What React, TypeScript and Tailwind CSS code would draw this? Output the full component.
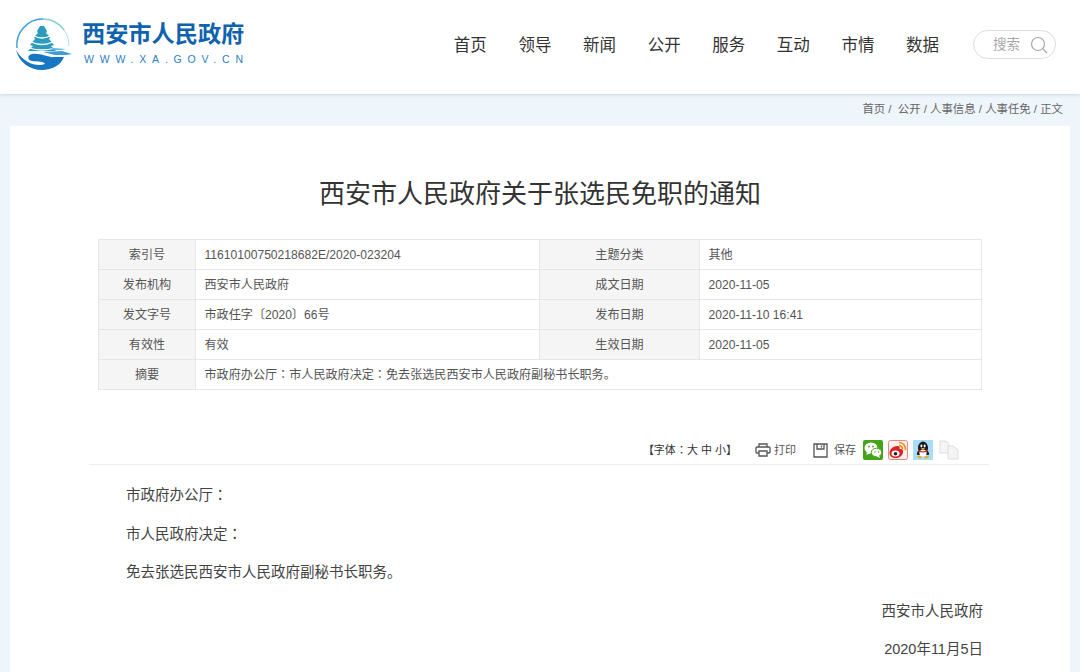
const font = { fontFamily: '"Liberation Sans", "Noto Sans CJK SC", sans-serif' };

function C() {
  return <span className="font-['Noto_Sans_CJK_TC'] leading-none">：</span>;
}

function Logo() {
  return (
    <svg width="60" height="53" viewBox="0 0 60 53" className="shrink-0">
      <path d="M3 30 A26 26 0 0 1 29 1" fill="none" stroke="#3aa0d8" strokeWidth="1.5" />
      <path d="M29 1 A26 26 0 0 1 50 12" fill="none" stroke="#86cfdc" strokeWidth="1.4" />
      <path d="M50 12 A26 26 0 0 1 55 28" fill="none" stroke="#b8e2ea" strokeWidth="1.1" />
      <path d="M26 8 L30 8 L33 13 L32 15 L36 19 L35 21 L40 27 L37 28 L42 33 L14 33 L19 28 L16 27 L21 21 L20 19 L24 15 L23 13 Z" fill="#2c9cbc" />
      <path d="M20 18 Q28 22 36 18 M17 24 Q28 29 39 24 M15 30 Q28 34 41 30" stroke="#fff" strokeWidth="1.3" fill="none" />
      <path d="M2 32 C5 44 15 52 28 52 C38 52 47 47 50 39 L40 39 C36 40 27 35 18 36 C13 37 13 42 18 43 C24 44 30 43 31 46 C24 49 10 46 2 32 Z" fill="#1877c2" />
      <path d="M29 34 L48 33 L58 36 L52 37 L41 37 Z" fill="#3d9dd8" />
      <path d="M38 30 L52 31 L47 32 L38 32 Z" fill="#5cb4df" />
    </svg>
  );
}

function Row({ a, b, c, d }: { a: string; b: React.ReactNode; c?: string; d?: string }) {
  return (
    <div className="flex h-[30px] border-b border-[#e6e6e6]">
      <div className="w-[97px] shrink-0 bg-[#f5f5f5] border-r border-[#e6e6e6] flex items-center justify-center pt-[1px]">{a}</div>
      {c ? (
        <>
          <div className="w-[343px] shrink-0 pl-[8.5px] flex items-center pt-[1px]">{b}</div>
          <div className="w-[161px] shrink-0 bg-[#f5f5f5] border-x border-[#e6e6e6] flex items-center justify-center pt-[1px]">{c}</div>
          <div className="flex-1 pl-[8.5px] flex items-center pt-[1px]">{d}</div>
        </>
      ) : (
        <div className="flex-1 pl-[8.5px] flex items-center pt-[1px]"><span>{b}</span></div>
      )}
    </div>
  );
}

function Tools() {
  return (
    <div className="flex items-center h-[30px] mr-[30px] justify-end text-[11px] text-[#444]">
      <span className="mr-[18px] text-[#333]">【字体<C />大 中 小】</span>
      <svg width="16" height="14" viewBox="0 0 16 14" fill="none" stroke="#555" strokeWidth="1.3" className="mr-[3px]">
        <path d="M4 4 V1 H12 V4 M4 10 H2 Q1 10 1 9 V5 Q1 4 2 4 H14 Q15 4 15 5 V9 Q15 10 14 10 H12 M4 8 H12 V13 H4 Z" />
      </svg>
      <span className="mr-[17px] text-[#555]">打印</span>
      <svg width="15" height="15" viewBox="0 0 15 15" fill="none" stroke="#555" strokeWidth="1.3" className="mr-[6px]">
        <path d="M1 1 H14 V14 H1 Z M4 1 V6 H11 V1 M8.5 2.5 V4.5" />
      </svg>
      <span className="mr-[7px] text-[#555]">保存</span>
      <svg width="20" height="20" viewBox="0 0 20 20" className="mr-[5px]">
        <rect width="20" height="20" rx="2" fill="#45a318" />
        <ellipse cx="8" cy="8" rx="6.5" ry="5.5" fill="#fff" />
        <path d="M4 11 L3.5 15 L7.5 13 Z" fill="#fff" />
        <ellipse cx="13.5" cy="12.5" rx="5.2" ry="4.3" fill="#fff" stroke="#45a318" />
        <path d="M16 15.5 L17 18 L13.5 16.5 Z" fill="#fff" />
        <circle cx="6" cy="6.5" r="0.9" fill="#45a318" /><circle cx="10" cy="6.5" r="0.9" fill="#45a318" />
        <circle cx="12" cy="12" r="0.7" fill="#45a318" /><circle cx="15.5" cy="12" r="0.7" fill="#45a318" />
      </svg>
      <svg width="20" height="20" viewBox="0 0 20 20" className="mr-[5px]">
        <rect x="0.5" y="0.5" width="19" height="19" rx="2" fill="#fdf0ea" stroke="#e08a80" />
        <path d="M1.5 13 C1.5 9 6 5.5 10 6 C12 6.5 12 8 11.5 9 C14 8.5 15.5 10 15 12.5 C14.5 16 11 18 7.5 18 C4 18 1.5 16 1.5 13 Z" fill="#dc2222" />
        <ellipse cx="7.5" cy="13.5" rx="4" ry="3" fill="#fff" />
        <circle cx="7.5" cy="13.7" r="1.8" fill="#222" />
        <path d="M11 2.5 A6.5 6.5 0 0 1 17.5 10 M11 5.5 A3.5 3.5 0 0 1 14.5 9.5" fill="none" stroke="#f08a1c" strokeWidth="1.7" />
      </svg>
      <svg width="20" height="20" viewBox="0 0 20 20" className="mr-[6px]">
        <rect width="20" height="20" fill="#a9dcf7" />
        <ellipse cx="10" cy="8" rx="5" ry="6.5" fill="#1a1a1a" />
        <path d="M5 11 Q3 14 4.5 15 L15.5 15 Q17 14 15 11 Z" fill="#1a1a1a" />
        <ellipse cx="10" cy="13" rx="3.6" ry="3.6" fill="#fff" />
        <ellipse cx="8.4" cy="6" rx="1" ry="1.4" fill="#fff" /><ellipse cx="11.6" cy="6" rx="1" ry="1.4" fill="#fff" />
        <path d="M7.5 8 H12.5 L10 9.6 Z" fill="#f5b21c" />
        <path d="M5.5 10 Q10 12.5 14.5 10 L14.5 11.5 Q10 13.5 5.5 11.5 Z" fill="#d9261c" />
        <path d="M4 16 Q4 18.5 8 18.5 L9 16.5 Z M16 16 Q16 18.5 12 18.5 L11 16.5 Z" fill="#f5a51c" />
      </svg>
      <svg width="20" height="20" viewBox="0 0 20 20" fill="#f4f4f4" stroke="#dedede">
        <path d="M1 1 H7 L10 4 V13 H1 Z" />
        <path d="M9 6 H14 L19 10 V19 H9 Z" />
      </svg>
    </div>
  );
}

export default function App() {
  const nav = ["首页", "领导", "新闻", "公开", "服务", "互动", "市情", "数据"];
  return (
    <div className="w-[1080px] h-[672px] overflow-hidden bg-[#eef5fb]" style={font}>
      <header className="h-[94px] bg-white shadow-[0_1px_3px_rgba(170,195,220,0.6)] flex items-start pl-[14px] pr-[24px]">
        <div className="mt-[18px]"><Logo /></div>
        <div className="ml-[8px] mt-[19px] flex flex-col">
          <div className="text-[23.2px] leading-[30px] font-bold text-[#0f62ad] whitespace-nowrap">西安市人民政府</div>
          <div className="text-[10.5px] leading-[14px] mt-[3px] ml-[2px] text-[#2a7fc4] tracking-[5.8px] whitespace-nowrap">WWW.XA.GOV.CN</div>
        </div>
        <nav className="flex gap-[31.6px] ml-[205px] mt-[33px] text-[16.5px] leading-[24px] text-[#333]">
          {nav.map((n) => (
            <span key={n} className="w-[33px] whitespace-nowrap">{n}</span>
          ))}
        </nav>
        <div className="ml-auto mt-[30px] w-[83px] h-[29px] rounded-full border border-[#dcdcdc] flex items-center pl-[19px] text-[13.5px] text-[#a8a8a8]">
          <span className="pt-[1px]">搜索</span>
          <svg width="18" height="18" viewBox="0 0 18 18" fill="none" stroke="#a8a8a8" strokeWidth="1.2" className="ml-[10px]">
            <circle cx="8" cy="8" r="6.5" />
            <path d="M13 13 L17 17" />
          </svg>
        </div>
      </header>

      <div className="h-[32px] flex items-center justify-end pr-[17px] text-[11.4px] text-[#666] whitespace-pre">
        首页 /  公开 / 人事信息 / 人事任免 / 正文
      </div>

      <main className="mx-[10px] bg-white h-[546px] flex flex-col">
        <h1 className="mt-[50px] text-[26px] leading-[36px] text-center text-[#333] font-normal">西安市人民政府关于张选民免职的通知</h1>

        <div className="mt-[27px] mx-[88px] border border-b-0 border-[#e6e6e6] text-[12.1px] text-[#555]">
          <Row a="索引号" b="11610100750218682E/2020-023204" c="主题分类" d="其他" />
          <Row a="发布机构" b="西安市人民政府" c="成文日期" d="2020-11-05" />
          <Row a="发文字号" b="市政任字〔2020〕66号" c="发布日期" d="2020-11-10 16:41" />
          <Row a="有效性" b="有效" c="生效日期" d="2020-11-05" />
          <Row a="摘要" b={<>市政府办公厅<C />市人民政府决定<C />免去张选民西安市人民政府副秘书长职务。</>} />
        </div>

        <div className="mt-[45px] ml-[79px] mr-[81px] h-[30px] border-b border-[#eeeeee]">
          <Tools />
        </div>

        <article className="mx-[116px] mt-[11px] text-[14.5px] leading-[38.5px] text-[#444]">
          <p>市政府办公厅<C /></p>
          <p>市人民政府决定<C /></p>
          <p>免去张选民西安市人民政府副秘书长职务。</p>
          <p className="text-right -mr-[29px]">西安市人民政府</p>
          <p className="text-right -mr-[29px]">2020年11月5日</p>
        </article>
      </main>
    </div>
  );
}
